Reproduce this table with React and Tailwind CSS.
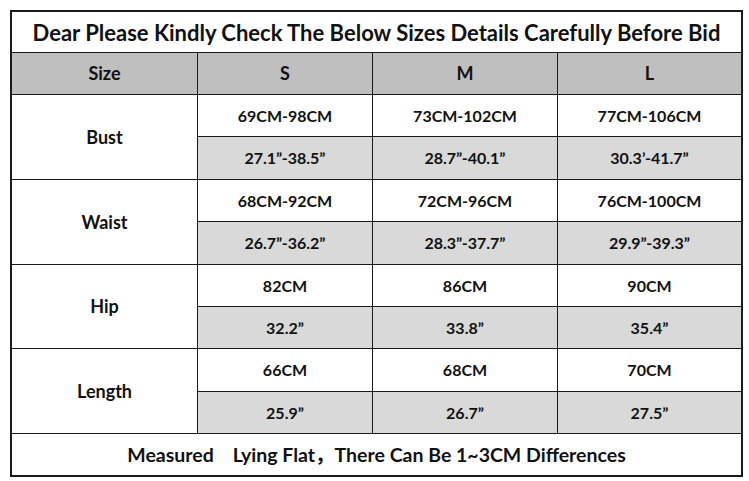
import React from 'react';

const rows = [
    { label: 'Bust', cm: ['69CM-98CM', '73CM-102CM', '77CM-106CM'], inch: ['27.1”-38.5”', '28.7”-40.1”', '30.3’-41.7”'], h: ['h-[41px]', 'h-[42px]'] },
    { label: 'Waist', cm: ['68CM-92CM', '72CM-96CM', '76CM-100CM'], inch: ['26.7”-36.2”', '28.3”-37.7”', '29.9”-39.3”'], h: ['h-[41px]', 'h-[42px]'] },
    { label: 'Hip', cm: ['82CM', '86CM', '90CM'], inch: ['32.2”', '33.8”', '35.4”'], h: ['h-[41px]', 'h-[41px]'] },
    { label: 'Length', cm: ['66CM', '68CM', '70CM'], inch: ['25.9”', '26.7”', '27.5”'], h: ['h-[42px]', 'h-[41px]'] },
];

const font = { fontFamily: 'Lato, "Noto Sans CJK SC", sans-serif' };

const SizeChart = () => {
    return (
        <div className="bg-white w-[749px] h-[481px] pt-[10px] pl-[10px]" style={font}>
            <div className="w-[733px] border-2 border-[#1a1a1a] bg-[#1a1a1a] grid grid-cols-[185px_174px_184px_183px] gap-px font-bold text-[#111]">
                {/* title */}
                <div className="col-span-4 h-[40px] bg-white flex items-center justify-center text-[22px]">
                    Dear Please Kindly Check The Below Sizes Details Carefully Before Bid
                </div>

                {/* header */}
                {['Size', 'S', 'M', 'L'].map((t) => (
                    <div key={t} className="h-[41px] bg-[#bfbfbf] flex items-center justify-center text-[18px]">
                        {t}
                    </div>
                ))}

                {rows.map((r) => (
                    <React.Fragment key={r.label}>
                        <div className="row-span-2 bg-white flex items-center justify-center text-[18px]">
                            {r.label}
                        </div>
                        {r.cm.map((v, i) => (
                            <div key={'c' + i} className={`${r.h[0]} bg-white flex items-center justify-center text-[16px]`}>
                                {v}
                            </div>
                        ))}
                        {r.inch.map((v, i) => (
                            <div key={'i' + i} className={`${r.h[1]} bg-[#d9d9d9] flex items-center justify-center text-[16px]`}>
                                {v}
                            </div>
                        ))}
                    </React.Fragment>
                ))}

                {/* footer */}
                <div className="col-span-4 h-[41px] bg-white flex items-center justify-center text-[19.5px] whitespace-pre">
                    {'Measured    Lying Flat，There Can Be 1~3CM Differences'}
                </div>
            </div>
        </div>
    );
};

export default function App() {
    return <SizeChart />;
}
